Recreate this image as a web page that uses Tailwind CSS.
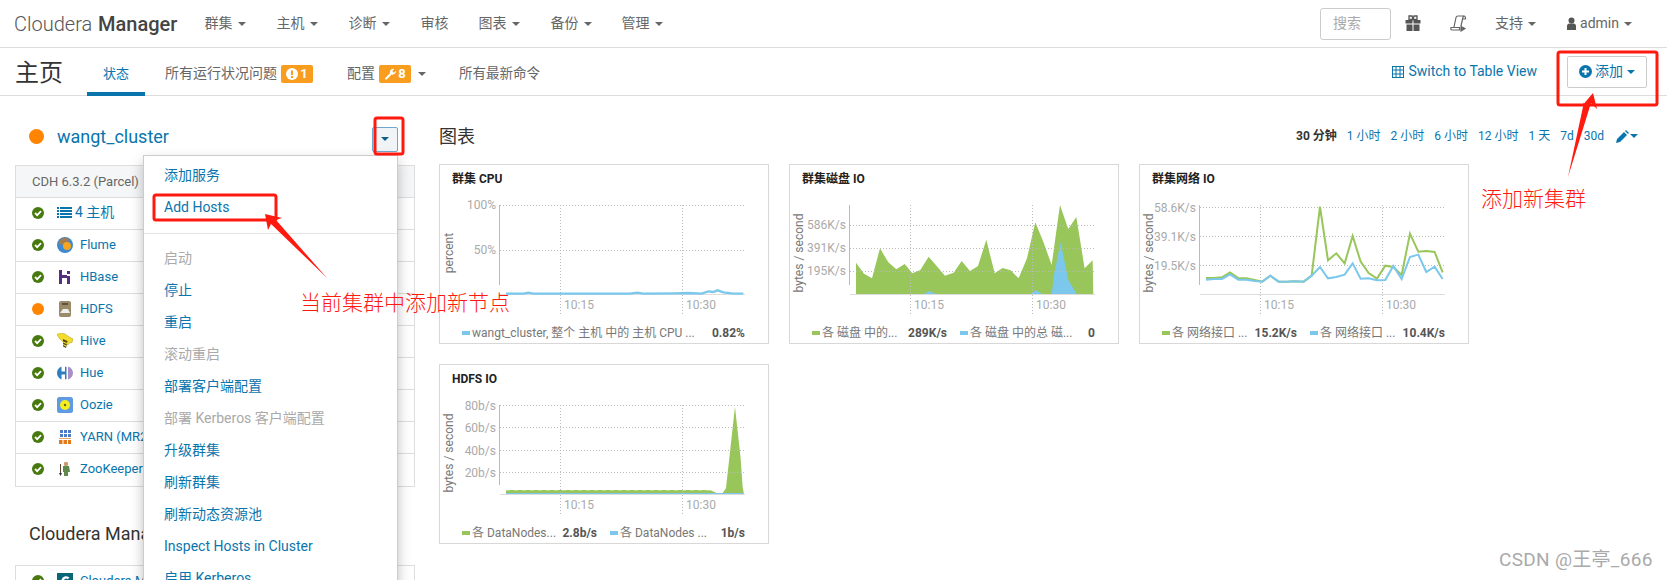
<!DOCTYPE html>
<html lang="zh">
<head>
<meta charset="UTF-8">
<title>Cloudera Manager 主页</title>
<script src="https://cdn.jsdelivr.net/npm/@tailwindcss/browser@4"></script>
</head>
<body class="font-[Roboto,'Noto_Sans_CJK_SC',sans-serif] text-[14px] text-[#666] bg-white">
<div class="relative w-[1667px] h-[580px] overflow-hidden">

  <!-- top nav -->
  <header class="flex items-center h-[48px] border-b border-[#ddd] pl-[14px] pr-[35px]">
    <a class="text-[20px] text-[#555] font-light mr-[12px] whitespace-nowrap">Cloudera <span class="font-medium text-[#444] ml-[1px]">Manager</span></a>
    <nav class="flex items-center">
      <a class="flex items-center px-[15px]">群集<i class="ml-[6px] border-x-4 border-t-4 border-x-transparent border-t-[#666]"></i></a>
      <a class="flex items-center px-[15px]">主机<i class="ml-[6px] border-x-4 border-t-4 border-x-transparent border-t-[#666]"></i></a>
      <a class="flex items-center px-[15px]">诊断<i class="ml-[6px] border-x-4 border-t-4 border-x-transparent border-t-[#666]"></i></a>
      <a class="flex items-center px-[15px]">审核</a>
      <a class="flex items-center px-[15px]">图表<i class="ml-[6px] border-x-4 border-t-4 border-x-transparent border-t-[#666]"></i></a>
      <a class="flex items-center px-[15px]">备份<i class="ml-[6px] border-x-4 border-t-4 border-x-transparent border-t-[#666]"></i></a>
      <a class="flex items-center px-[14px]">管理<i class="ml-[6px] border-x-4 border-t-4 border-x-transparent border-t-[#666]"></i></a>
    </nav>
    <div class="ml-auto flex items-center">
      <div class="w-[71px] h-[32px] border border-[#ccc] rounded-[3px] pl-[12px] flex items-center text-[#aaa]">搜索</div>
      <svg class="ml-[14px]" width="16" height="17" viewBox="0 0 16 17" fill="#555"><path d="M.5 5h7v3.500h-7zM8.500 5h7v3.500h-7zM1.500 9.500h6V16h-6zM8.500 9.500h6V16h-6z"/><path d="M4 4.500V1h3l1 3.500L9 1h3v3.500z" fill="none" stroke="#555" stroke-width="1.300"/></svg>
      <svg class="ml-[29px]" width="17" height="17" viewBox="0 0 17 17" fill="none" stroke="#666" stroke-width="1.200"><path d="M4 12 6 2.500c.2-1 1-1.500 2-1.500h6.500c-.8 0-1.400.6-1.600 1.500L11 11"/><path d="M13.500 1c1 0 2 .6 2 2v1h-2.500"/><path d="M1 12.500h8.500v2.500H2c-1 0-1.500-1-1-2.500z"/><path d="M11 11.500l4 2-4 2.500z" fill="#666"/></svg>
      <a class="ml-[28px] flex items-center">支持<i class="ml-[5px] border-x-4 border-t-4 border-x-transparent border-t-[#666]"></i></a>
      <svg class="ml-[31px]" width="9" height="14" viewBox="0 0 9 14" fill="#555"><circle cx="4.500" cy="3.500" r="3"/><path d="M0 13V9c0-1.500 1-2.500 2.500-2.500h4C8 6.500 9 7.500 9 9v4z"/></svg>
      <a class="ml-[4px] flex items-center">admin<i class="ml-[5px] border-x-4 border-t-4 border-x-transparent border-t-[#666]"></i></a>
    </div>
  </header>

  <!-- sub nav -->
  <div class="flex items-stretch h-[48px] border-b border-[#ddd]">
    <h1 class="ml-[15px] mr-[24px] text-[24px] text-[#333] flex items-center pt-[2px]">主页</h1>
    <a class="flex items-center px-[16px] pt-[8px] border-b-4 border-[#0a75ad] text-[#0a75ad] text-[13px] h-[48px]">状态</a>
    <a class="ml-[4px] flex items-center px-[16px] pt-[4px]">所有运行状况问题
      <span class="ml-[4px] w-[32px] h-[18px] rounded-[2px] bg-[#f89d1e] text-white font-bold text-[13px] flex items-center justify-center gap-[2px]">
        <svg width="12" height="12" viewBox="0 0 12 12"><circle cx="6" cy="6" r="6" fill="#fff"/><rect x="5" y="2.500" width="2" height="4.500" fill="#f89d1e"/><rect x="5" y="8" width="2" height="2" fill="#f89d1e"/></svg>1</span>
    </a>
    <a class="ml-[2px] flex items-center px-[16px] pt-[4px]">配置
      <span class="ml-[4px] w-[32px] h-[18px] rounded-[2px] bg-[#f89d1e] text-white font-bold text-[13px] flex items-center justify-center gap-[2px]">
        <svg width="12" height="12" viewBox="0 0 12 12" fill="#fff"><path d="M1 10.200 6 5.200C5.500 3.500 6.500 1 9 .8c.5 0 1 0 1.300.2L8.300 3l.7 1 1 .7 2-2c.3 2.500-2 4.500-4.300 3.800l-5 5c-.8.500-2.300-.7-1.700-1.300z"/></svg>8</span>
      <i class="ml-[7px] border-x-4 border-t-4 border-x-transparent border-t-[#666]"></i>
    </a>
    <a class="ml-[1px] flex items-center px-[16px] pt-[4px] text-[13.500px]">所有最新命令</a>
    <div class="ml-auto flex items-center pr-[20px]">
      <a class="flex items-center text-[#0a75ad] mr-[30px]">
        <svg class="mr-[4px]" width="12" height="12" viewBox="0 0 12 12" fill="none" stroke="#0a75ad"><rect x=".5" y=".5" width="11" height="11"/><path d="M.5 4h11M.5 8h11M4 .5v11M8 .5v11"/></svg>
        Switch to Table View</a>
      <button class="w-[80px] h-[32px] border border-[#ccc] rounded-[2px] flex items-center pl-[11px] text-[#0a75ad]">
        <svg class="mr-[3px]" width="13" height="13" viewBox="0 0 13 13"><circle cx="6.500" cy="6.500" r="6.500" fill="#0a75ad"/><path d="M3 5.500h2.500V3h2v2.500H10v2H7.500V10h-2V7.500H3z" fill="#fff"/></svg>
        添加<i class="ml-[4px] border-x-4 border-t-4 border-x-transparent border-t-[#0a75ad]"></i></button>
    </div>
  </div>

  <main class="flex items-start">
    <!-- left column -->
    <section class="ml-[15px] w-[400px] shrink-0">
      <div class="mt-[25px] h-[30px] flex items-center pl-[14px] relative">
        <span class="w-[15px] h-[15px] rounded-full bg-[#ff8400]"></span>
        <a class="ml-[13px] text-[18px] text-[#0a75ad]">wangt_cluster</a>
        <button class="ml-auto mr-[17px] mt-[6px] w-[26px] h-[25px] border border-[#6fa8cc] bg-[#f0f4f7] rounded-[2px] flex items-center justify-center"><i class="border-x-4 border-t-4 border-x-transparent border-t-[#0a5f8c]"></i></button>
      </div>
      <div class="mt-[14px] border border-[#ddd] text-[13px] text-[#0a75ad]">
        <div class="h-[32px] flex items-center pl-[16px] bg-[#f5f6f7] border-b border-[#ddd] text-[#666]">CDH 6.3.2 (Parcel)</div>
        <div class="h-[32px] flex items-center pl-[16px] pb-[2px] border-b border-[#ddd]">
          <svg width="12" height="12" viewBox="0 0 12 12"><circle cx="6" cy="6" r="6" fill="#47790f"/><path d="M3 6l2.200 2.200L9 4.200" fill="none" stroke="#fff" stroke-width="1.800"/></svg>
          <svg class="ml-[13px]" width="15" height="11" viewBox="0 0 15 11" fill="#0a75ad"><path d="M0 0h2v2H0zM3 0h12v2H3zM0 3h2v2H0zM3 3h12v2H3zM0 6h2v2H0zM3 6h12v2H3zM0 9h2v2H0zM3 9h12v2H3z"/></svg>
          <span class="ml-[3px] text-[14px]">4 主机</span>
        </div>
        <div class="h-[32px] flex items-center pl-[16px] pb-[2px] border-b border-[#ddd]">
          <svg width="12" height="12" viewBox="0 0 12 12"><circle cx="6" cy="6" r="6" fill="#47790f"/><path d="M3 6l2.200 2.200L9 4.200" fill="none" stroke="#fff" stroke-width="1.800"/></svg>
          <svg class="ml-[13px] mr-[7px]" width="16" height="16" viewBox="0 0 16 16"><circle cx="8" cy="8" r="8" fill="#3d8ad0"/><path d="M1.500 7C2 3 5 .8 8 .8c2 0 3.500 1 4 2.500L8 8z" fill="#a87a4c"/><circle cx="10" cy="9" r="4" fill="#f5a61e"/></svg>
          Flume
        </div>
        <div class="h-[32px] flex items-center pl-[16px] pb-[2px] border-b border-[#ddd]">
          <svg width="12" height="12" viewBox="0 0 12 12"><circle cx="6" cy="6" r="6" fill="#47790f"/><path d="M3 6l2.200 2.200L9 4.200" fill="none" stroke="#fff" stroke-width="1.800"/></svg>
          <svg class="ml-[13px] mr-[7px]" width="16" height="16" viewBox="0 0 16 16" fill="#55307f"><path d="M2 1h3v5h5v3H5v6H2zM10 7h3v8h-3zM10 2h3v3h-3z"/></svg>
          HBase
        </div>
        <div class="h-[32px] flex items-center pl-[16px] pb-[2px] border-b border-[#ddd]">
          <span class="w-[12px] h-[12px] rounded-full bg-[#ff8400]"></span>
          <svg class="ml-[13px] mr-[7px]" width="16" height="16" viewBox="0 0 16 16"><rect x="2" y="0" width="12" height="16" rx="2" fill="#9a8a68"/><rect x="5" y="2" width="6" height="2" fill="#5e5240"/><path d="M3 12l3-4h5l2 4z" fill="#eee"/></svg>
          HDFS
        </div>
        <div class="h-[32px] flex items-center pl-[16px] pb-[2px] border-b border-[#ddd]">
          <svg width="12" height="12" viewBox="0 0 12 12"><circle cx="6" cy="6" r="6" fill="#47790f"/><path d="M3 6l2.200 2.200L9 4.200" fill="none" stroke="#fff" stroke-width="1.800"/></svg>
          <svg class="ml-[13px] mr-[7px]" width="16" height="16" viewBox="0 0 16 16"><path d="M0 1.500 3.500 0 8 1l3.500 2.500L16 6l-1 3.500-3 .5-1 2-3-1.500-3-2.500-3-3z" fill="#f4dc2b" stroke="#a89a20" stroke-width=".5"/><path d="M6 6l4.500 2L9 15l-3-1.500z" fill="#4f4b18"/><path d="M6 9l4 1.500M6 11.500l3 1.500" stroke="#f4dc2b" stroke-width="1.200"/></svg>
          Hive
        </div>
        <div class="h-[32px] flex items-center pl-[16px] pb-[2px] border-b border-[#ddd]">
          <svg width="12" height="12" viewBox="0 0 12 12"><circle cx="6" cy="6" r="6" fill="#47790f"/><path d="M3 6l2.200 2.200L9 4.200" fill="none" stroke="#fff" stroke-width="1.800"/></svg>
          <svg class="ml-[13px] mr-[7px]" width="16" height="16" viewBox="0 0 16 16"><path d="M4.500 1.500C2 2.500 0 5 0 8s2 5.500 4.500 6.500V9.500H8v5l1.500-.5V2L8 1.500v5H4.500z" fill="#2f7ec0"/><path d="M11 1.500c3 1 5 3.500 5 6.500s-2 5.500-5 6.500z" fill="#a98fc6"/></svg>
          Hue
        </div>
        <div class="h-[32px] flex items-center pl-[16px] pb-[2px] border-b border-[#ddd]">
          <svg width="12" height="12" viewBox="0 0 12 12"><circle cx="6" cy="6" r="6" fill="#47790f"/><path d="M3 6l2.200 2.200L9 4.200" fill="none" stroke="#fff" stroke-width="1.800"/></svg>
          <svg class="ml-[13px] mr-[7px]" width="16" height="16" viewBox="0 0 16 16"><rect width="16" height="16" rx="2.500" fill="#5f9be0"/><circle cx="8" cy="8" r="5" fill="#f5ee1c"/><circle cx="8" cy="8" r="1.200" fill="#66602a"/></svg>
          Oozie
        </div>
        <div class="h-[32px] flex items-center pl-[16px] pb-[2px] border-b border-[#ddd]">
          <svg width="12" height="12" viewBox="0 0 12 12"><circle cx="6" cy="6" r="6" fill="#47790f"/><path d="M3 6l2.200 2.200L9 4.200" fill="none" stroke="#fff" stroke-width="1.800"/></svg>
          <svg class="ml-[13px] mr-[7px]" width="16" height="14" viewBox="0 0 16 14"><path d="M3 0h3v3H3zM7 0h3v3H7zM11 0h3v3h-3zM3 4h3v3H3zM7 4h3v3H7zM11 4h3v3h-3z" fill="#4d7bc8"/><path d="M2 8h12v1H2z" fill="#e9a46c"/><path d="M2 10h3.500v4H2zM6.500 10H10v4H6.500zM11 10h3v4h-3z" fill="#e07a1c"/></svg>
          YARN (MR2
        </div>
        <div class="h-[32px] flex items-center pl-[16px] pb-[2px]">
          <svg width="12" height="12" viewBox="0 0 12 12"><circle cx="6" cy="6" r="6" fill="#47790f"/><path d="M3 6l2.200 2.200L9 4.200" fill="none" stroke="#fff" stroke-width="1.800"/></svg>
          <svg class="ml-[13px] mr-[7px]" width="16" height="16" viewBox="0 0 16 16"><circle cx="9" cy="3" r="2.200" fill="#c99a6e"/><path d="M6 5h6l1 6h-2v4H7v-4H6z" fill="#5f8a4c"/><path d="M3.500 3v9" stroke="#5c4630"/><path d="M2 12h3l-1.500 3z" fill="#333"/></svg>
          ZooKeeper
        </div>
      </div>
      <h2 class="mt-[35px] ml-[14px] text-[18px] leading-[24px] text-[#333] whitespace-nowrap">Cloudera Manager</h2>
      <div class="mt-[19px] border border-[#ddd] text-[13px] text-[#0a75ad]">
        <div class="h-[32px] flex items-center pl-[16px] pb-[2px]">
          <svg width="12" height="12" viewBox="0 0 12 12"><circle cx="6" cy="6" r="6" fill="#47790f"/><path d="M3 6l2.200 2.200L9 4.200" fill="none" stroke="#fff" stroke-width="1.800"/></svg>
          <svg class="ml-[13px] mr-[7px]" width="16" height="16" viewBox="0 0 16 16"><rect width="16" height="16" fill="#0b6578"/><path d="M11.500 5.500C10.500 4 6 3.500 5.500 8s5 5 6 2.500" fill="none" stroke="#fff" stroke-width="2.400"/></svg>
          Cloudera Manager
        </div>
      </div>
    </section>

    <!-- charts -->
    <section class="ml-[24px] flex-1 pr-[29px]">
      <div class="mt-[25px] h-[30px] flex items-center">
        <h2 class="text-[18px] text-[#333]">图表</h2>
        <div class="ml-auto flex items-center gap-[10px] text-[12px] text-[#0a75ad]">
          <b class="text-[#333]">30 分钟</b><a>1 小时</a><a>2 小时</a><a>6 小时</a><a>12 小时</a><a>1 天</a><a>7d</a><a>30d</a>
          <span class="flex items-center ml-[2px]"><svg width="13" height="13" viewBox="0 0 13 13" fill="#0a75ad"><path d="M0 13l1-4 7-7 3 3-7 7zM9 1l1-1 3 3-1 1z"/></svg><i class="ml-[1px] border-x-4 border-t-4 border-x-transparent border-t-[#0a75ad]"></i></span>
        </div>
      </div>
      <div class="mt-[13px] grid grid-cols-[330px_330px_330px] gap-[20px] text-[12px]">

        <div class="w-[330px] h-[180px] border border-[#d8d8d8]">
          <svg width="328" height="178">
            <text x="12" y="18" class="fill-[#222] font-bold">群集 CPU</text>
            <g stroke="#bbb" stroke-dasharray="1 2"><path d="M60 40.500H305M60 85.500H305M120.500 40V150M242.500 40V150"/></g>
            <path d="M59.500 40V120" stroke="#bbb"/><path d="M60 129.500H305" stroke="#ddd"/>
            <g transform="translate(-10 -10) scale(.3333)"><polyline points="228,416 280,416 295,413 310,416 600,416 622,413 640,416 735,415 775,414 815,416 835,409 850,411 863,406 880,412 905,415 940,416" fill="none" stroke="#7bc8ec" stroke-width="7"/></g>
            <g class="fill-[#aaa]"><text x="56" y="44" text-anchor="end">100%</text><text x="56" y="89" text-anchor="end">50%</text><text x="124" y="144">10:15</text><text x="246" y="144">10:30</text></g>
            <text transform="translate(13 88) rotate(-90)" text-anchor="middle" class="fill-[#777]">percent</text>
            <rect x="22" y="166" width="8" height="4" fill="#7bc8ec"/>
            <text x="32" y="172" class="fill-[#777]">wangt_cluster, 整个 主机 中的 主机 CPU ...</text>
            <text x="305" y="172" text-anchor="end" class="fill-[#555] font-bold">0.82%</text>
          </svg>
        </div>

        <div class="w-[330px] h-[180px] border border-[#d8d8d8]">
          <svg width="328" height="178">
            <text x="12" y="18" class="fill-[#222] font-bold">群集磁盘 IO</text>
            <g transform="translate(-10 -10) scale(.3333)">
              <polygon points="228,323 252,356 276,370 300,280 325,322 349,343 374,327 397,355 421,345 446,305 470,333 495,362 521,353 545,318 570,348 594,333 619,254 644,355 668,339 692,346 716,370 741,310 766,202 790,260 815,330 840,150 865,222 889,186 914,340 938,316 940,418 228,418" fill="#98c65a"/>
              <polygon points="430,418 448,408 470,418 750,418 768,405 788,418 815,418 822,360 842,262 865,375 889,415 889,418" fill="#7bc8ec"/>
            </g>
            <g stroke="#bbb" stroke-dasharray="1 2"><path d="M60 60.500H305M60 83.500H305M60 106.500H305M120.500 40V150M242.500 40V150"/></g>
            <path d="M59.500 40V120" stroke="#bbb"/><path d="M60 129.500H305" stroke="#ddd"/>
            <g class="fill-[#aaa]"><text x="56" y="64" text-anchor="end">586K/s</text><text x="56" y="87" text-anchor="end">391K/s</text><text x="56" y="110" text-anchor="end">195K/s</text><text x="124" y="144">10:15</text><text x="246" y="144">10:30</text></g>
            <text transform="translate(13 88) rotate(-90)" text-anchor="middle" class="fill-[#777]">bytes / second</text>
            <rect x="22" y="166" width="8" height="4" fill="#98c65a"/>
            <text x="32" y="172" class="fill-[#777]">各 磁盘 中的...</text>
            <text x="157" y="172" text-anchor="end" class="fill-[#555] font-bold">289K/s</text>
            <rect x="170" y="166" width="8" height="4" fill="#7bc8ec"/>
            <text x="180" y="172" class="fill-[#777]">各 磁盘 中的总 磁...</text>
            <text x="305" y="172" text-anchor="end" class="fill-[#555] font-bold">0</text>
          </svg>
        </div>

        <div class="w-[330px] h-[180px] border border-[#d8d8d8]">
          <svg width="328" height="178">
            <text x="12" y="18" class="fill-[#222] font-bold">群集网络 IO</text>
            <g stroke="#bbb" stroke-dasharray="1 2"><path d="M60 42.500H305M60 71.500H305M60 100.500H305M120.500 40V150M242.500 40V150"/></g>
            <path d="M59.500 40V120" stroke="#bbb"/><path d="M60 129.500H305" stroke="#ddd"/>
            <g transform="translate(-10 -10) scale(.3333)" fill="none" stroke-width="6">
              <polyline points="228,369 252,369 276,367 300,352 325,369 349,370 374,375 397,380 421,362 446,380 470,380 495,379 521,380 545,362 570,155 594,316 619,295 644,325 668,243 692,320 716,354 741,371 766,332 790,336 815,360 840,236 865,290 889,288 914,291 938,352" stroke="#98c65a"/>
              <polyline points="228,374 252,372 276,372 300,358 325,374 349,374 374,378 397,380 421,362 446,380 470,380 495,379 521,380 545,362 570,336 594,370 619,366 644,359 668,325 692,371 716,370 741,376 766,375 790,333 815,372 840,306 865,299 889,351 914,335 938,372" stroke="#7bc8ec"/>
            </g>
            <g class="fill-[#aaa]"><text x="56" y="47" text-anchor="end">58.6K/s</text><text x="56" y="76" text-anchor="end">39.1K/s</text><text x="56" y="105" text-anchor="end">19.5K/s</text><text x="124" y="144">10:15</text><text x="246" y="144">10:30</text></g>
            <text transform="translate(13 88) rotate(-90)" text-anchor="middle" class="fill-[#777]">bytes / second</text>
            <rect x="22" y="166" width="8" height="4" fill="#98c65a"/>
            <text x="32" y="172" class="fill-[#777]">各 网络接口 ...</text>
            <text x="157" y="172" text-anchor="end" class="fill-[#555] font-bold">15.2K/s</text>
            <rect x="170" y="166" width="8" height="4" fill="#7bc8ec"/>
            <text x="180" y="172" class="fill-[#777]">各 网络接口 ...</text>
            <text x="305" y="172" text-anchor="end" class="fill-[#555] font-bold">10.4K/s</text>
          </svg>
        </div>

        <div class="w-[330px] h-[180px] border border-[#d8d8d8]">
          <svg width="328" height="178">
            <text x="12" y="18" class="fill-[#222] font-bold">HDFS IO</text>
            <g transform="translate(-10 -10) scale(.3333)">
              <polygon points="228,405 840,405 860,414 878,414 888,400 898,310 915,155 932,310 938,395 942,418 228,418" fill="#98c65a"/>
              <polygon points="228,414 940,414 940,418 228,418" fill="#7bc8ec"/>
              <polyline points="228,405 840,405" fill="none" stroke="#fff" stroke-width="2" stroke-dasharray="12 12"/>
            </g>
            <g stroke="#bbb" stroke-dasharray="1 2"><path d="M60 40.500H305M60 62.500H305M60 85.500H305M60 107.500H305M120.500 40V150M242.500 40V150"/></g>
            <path d="M59.500 40V120" stroke="#bbb"/><path d="M60 129.500H305" stroke="#ddd"/>
            <g class="fill-[#aaa]"><text x="56" y="45" text-anchor="end">80b/s</text><text x="56" y="67" text-anchor="end">60b/s</text><text x="56" y="90" text-anchor="end">40b/s</text><text x="56" y="112" text-anchor="end">20b/s</text><text x="124" y="144">10:15</text><text x="246" y="144">10:30</text></g>
            <text transform="translate(13 88) rotate(-90)" text-anchor="middle" class="fill-[#777]">bytes / second</text>
            <rect x="22" y="166" width="8" height="4" fill="#98c65a"/>
            <text x="32" y="172" class="fill-[#777]">各 DataNodes...</text>
            <text x="157" y="172" text-anchor="end" class="fill-[#555] font-bold">2.8b/s</text>
            <rect x="170" y="166" width="8" height="4" fill="#7bc8ec"/>
            <text x="180" y="172" class="fill-[#777]">各 DataNodes ...</text>
            <text x="305" y="172" text-anchor="end" class="fill-[#555] font-bold">1b/s</text>
          </svg>
        </div>
      </div>
    </section>
  </main>

  <!-- cluster dropdown -->
  <ul class="absolute left-[143px] top-[155px] w-[255px] bg-white border border-[#ccc] shadow-[0_6px_12px_rgba(0,0,0,0.25)] pt-[3px] text-[#0a75ad] text-[14px]">
    <li class="h-[32px] flex items-center px-[20px]">添加服务</li>
    <li class="h-[32px] flex items-center px-[20px]">Add Hosts</li>
    <li class="mt-[10px] mb-[8px] h-px bg-[#e5e5e5]"></li>
    <li class="h-[32px] flex items-center px-[20px] text-[#aaa]">启动</li>
    <li class="h-[32px] flex items-center px-[20px]">停止</li>
    <li class="h-[32px] flex items-center px-[20px]">重启</li>
    <li class="h-[32px] flex items-center px-[20px] text-[#aaa]">滚动重启</li>
    <li class="h-[32px] flex items-center px-[20px]">部署客户端配置</li>
    <li class="h-[32px] flex items-center px-[20px] text-[#aaa]">部署 Kerberos 客户端配置</li>
    <li class="h-[32px] flex items-center px-[20px]">升级群集</li>
    <li class="h-[32px] flex items-center px-[20px]">刷新群集</li>
    <li class="h-[32px] flex items-center px-[20px]">刷新动态资源池</li>
    <li class="h-[32px] flex items-center px-[20px]">Inspect Hosts in Cluster</li>
    <li class="h-[32px] flex items-center px-[20px]">启用 Kerberos</li>
  </ul>

  <!-- red annotations drawn over the screenshot -->
  <svg class="absolute left-0 top-0 pointer-events-none" width="1667" height="580" fill="none" stroke="#ff1a0f" stroke-width="3">
    <rect x="375" y="118" width="28" height="36" rx="2"/>
    <rect x="154" y="195" width="122" height="25" rx="2"/>
    <rect x="1558" y="52" width="99" height="53" rx="2"/>
    <polygon points="265,214 282,218 276,220 327,278 271,224 268,230" fill="#ff1a0f" stroke="none"/>
    <polygon points="1593,93 1597,109 1591,103 1568,177 1584,102 1582,106" fill="#ff1a0f" stroke="none"/>
  </svg>
  <span class="absolute left-[300px] top-[290px] text-[21px] leading-[26px] font-light text-[#ff1a0f] whitespace-nowrap">当前集群中添加新节点</span>
  <span class="absolute left-[1481px] top-[186px] text-[21px] leading-[26px] font-light text-[#ff1a0f] whitespace-nowrap">添加新集群</span>
  <span class="absolute left-[1499px] top-[548px] text-[19px] leading-[24px] tracking-[0.3px] text-[#aaa] whitespace-nowrap">CSDN @王亭_666</span>
</div>
</body>
</html>
